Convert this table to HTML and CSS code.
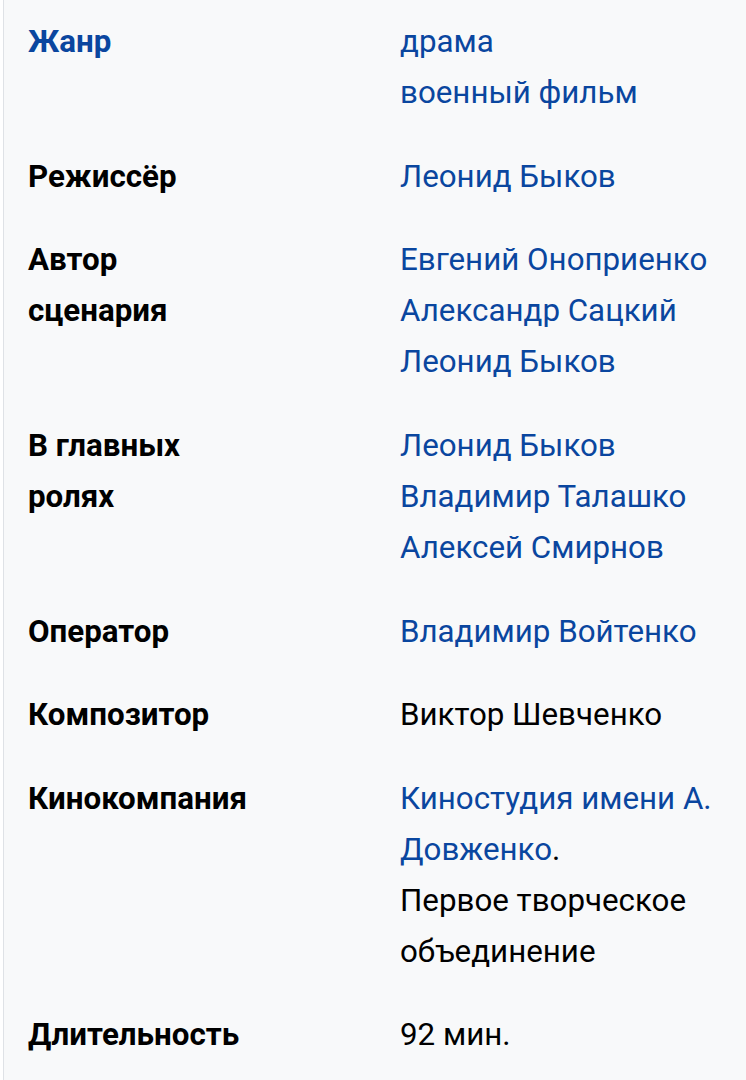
FILE: index.html
```html
<!DOCTYPE html>
<html lang="ru">
<head>
<meta charset="utf-8">
<link rel="stylesheet" href="styles.css">
</head>
<body>
<div class="infobox">
  <div class="row">
    <div class="label"><a href="#">Жанр</a></div>
    <div class="value"><a href="#">драма</a><br><a href="#">военный фильм</a></div>
  </div>
  <div class="row">
    <div class="label">Режиссёр</div>
    <div class="value"><a href="#">Леонид Быков</a></div>
  </div>
  <div class="row">
    <div class="label">Автор<br>сценария</div>
    <div class="value"><a href="#">Евгений Оноприенко</a><br><a href="#">Александр Сацкий</a><br><a href="#">Леонид Быков</a></div>
  </div>
  <div class="row">
    <div class="label">В главных<br>ролях</div>
    <div class="value"><a href="#">Леонид Быков</a><br><a href="#">Владимир Талашко</a><br><a href="#">Алексей Смирнов</a></div>
  </div>
  <div class="row">
    <div class="label">Оператор</div>
    <div class="value"><a href="#">Владимир Войтенко</a></div>
  </div>
  <div class="row">
    <div class="label">Композитор</div>
    <div class="value">Виктор Шевченко</div>
  </div>
  <div class="row">
    <div class="label">Кинокомпания</div>
    <div class="value"><a href="#">Киностудия имени А.<br>Довженко</a>.<br>Первое творческое<br>объединение</div>
  </div>
  <div class="row">
    <div class="label">Длительность</div>
    <div class="value">92 мин.</div>
  </div>
</div>
</body>
</html>
```
FILE: styles.css
```css
html, body {
  margin: 0;
  padding: 0;
  background: #ffffff;
}
body {
  font-family: Roboto, "Noto Sans", sans-serif;
  font-size: 31.3px;
  line-height: 51px;
  color: #000000;
}
a {
  color: #0a469f;
  text-decoration: none;
}
.infobox {
  margin-left: 3px;
  border-left: 1px solid #dfe2e6;
  background: #f8f9fa;
  padding-left: 24px;
  min-height: 1080px;
  box-sizing: border-box;
}
.row {
  display: grid;
  grid-template-columns: 372px 1fr;
  padding: 16.3px 0;
}
.label {
  font-weight: 700;
}
```
